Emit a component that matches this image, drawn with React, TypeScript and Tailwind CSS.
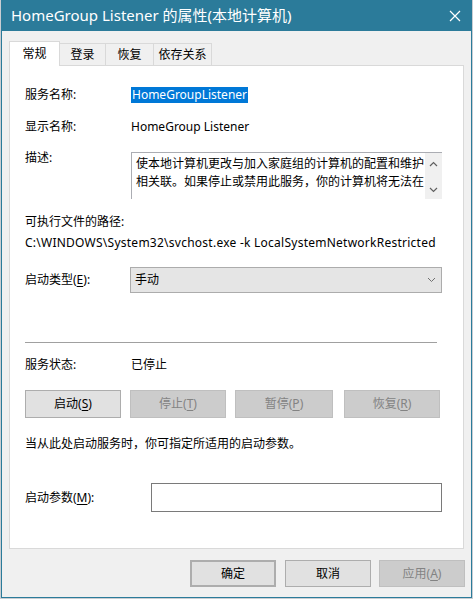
import type { ReactNode } from "react";

const font = { fontFamily: '"Noto Sans", "Noto Sans CJK SC", sans-serif' };

function Key({ k }: { k: string }) {
  return <span className="underline underline-offset-2">{k}</span>;
}

function Btn({
  children,
  disabled,
  className = "",
}: {
  children: ReactNode;
  disabled?: boolean;
  className?: string;
}) {
  return (
    <div
      className={
        "flex items-center justify-center border text-[12px] " +
        (disabled
          ? "bg-[#cccccc] border-[#bfbfbf] text-[#838383] "
          : "bg-[#e1e1e1] border-[#adadad] text-black ") +
        className
      }
    >
      {children}
    </div>
  );
}

function Tab({ label, active, w }: { label: string; active?: boolean; w: string }) {
  if (active) {
    return (
      <div
        className={
          "relative z-10 -mb-px flex h-[25px] items-center justify-center border border-b-0 border-[#d9d9d9] bg-white text-[12px] " +
          w
        }
      >
        {label}
      </div>
    );
  }
  return (
    <div
      className={
        "flex h-[22px] items-center justify-center border border-b-0 border-l-0 border-[#d9d9d9] bg-[#f0f0f0] text-[12px] " +
        w
      }
    >
      {label}
    </div>
  );
}

export default function App() {
  return (
    <div className="h-[599px] w-[473px] bg-[#c9cdd2] pl-px" style={font}>
      <div className="flex h-[598px] w-[471px] flex-col border border-t-0 border-[#2b7b9a] bg-[#f0f0f0] text-black">
        {/* title bar */}
        <div className="flex h-[31px] shrink-0 items-center justify-between bg-[#2b7b9a] pl-[9px] pr-[9px] text-white">
          <span className="text-[15px]">HomeGroup Listener 的属性(本地计算机)</span>
          <svg width="12" height="12" viewBox="0 0 12 12" className="mr-[1px]">
            <path d="M1 1L11 11M11 1L1 11" stroke="white" strokeWidth="1.2" />
          </svg>
        </div>

        <div className="flex flex-col pl-[7px]">
          {/* tabs */}
          <div className="mt-[10px] flex items-end">
            <Tab label="常规" active w="w-[51px]" />
            <Tab label="登录" w="w-[46px]" />
            <Tab label="恢复" w="w-[48px]" />
            <Tab label="依存关系" w="w-[58px]" />
          </div>

          {/* page */}
          <div className="flex h-[484px] w-[455px] flex-col border border-[#d9d9d9] bg-white pl-[15px] text-[12px]">
            <div className="mt-[21px] flex h-[16px] items-center">
              <span className="w-[106px]">服务名称:</span>
              <span className="flex h-[16px] items-center bg-[#0078d7] px-[1px] text-white">
                HomeGroupListener
              </span>
            </div>

            <div className="mt-[16px] flex h-[16px] items-center">
              <span className="w-[106px]">显示名称:</span>
              <span>HomeGroup Listener</span>
            </div>

            <div className="mt-[17px] flex">
              <span className="mt-[-2px] flex h-[16px] w-[106px] items-center">描述:</span>
              <div className="flex h-[47px] w-[311px] border-l border-t border-[#abadb3]">
                <div className="flex-1 overflow-hidden whitespace-nowrap pl-[4px] pt-[2px] text-[12px] leading-[18px]">
                  使本地计算机更改与加入家庭组的计算机的配置和维护
                  <br />
                  相关联。如果停止或禁用此服务，你的计算机将无法在
                </div>
                <div className="flex w-[17px] shrink-0 flex-col items-center justify-between bg-[#f0f0f0] pb-[6px] pt-[8px]">
                  <svg width="9" height="6" viewBox="0 0 9 6">
                    <path d="M1 5L4.5 1.5L8 5" fill="none" stroke="#606060" strokeWidth="1.2" />
                  </svg>
                  <svg width="9" height="6" viewBox="0 0 9 6">
                    <path d="M1 1L4.5 4.5L8 1" fill="none" stroke="#606060" strokeWidth="1.2" />
                  </svg>
                </div>
              </div>
            </div>

            <div className="mt-[15px] flex h-[16px] items-center">可执行文件的路径:</div>
            <div className="mt-[5px] flex h-[16px] items-center tracking-[0.25px]">
              C:\WINDOWS\System32\svchost.exe -k LocalSystemNetworkRestricted
            </div>

            <div className="mt-[16px] flex h-[26px] items-center">
              <span className="w-[105px]">
                启动类型(<Key k="E" />):
              </span>
              <div className="flex h-[26px] w-[312px] items-center justify-between border border-[#acacac] bg-[#e5e5e5] pl-[4px] pr-[5px]">
                <span>手动</span>
                <svg width="9" height="6" viewBox="0 0 9 6">
                  <path d="M1 1L4.5 4.5L8 1" fill="none" stroke="#707070" strokeWidth="1" />
                </svg>
              </div>
            </div>

            <div className="mt-[49px] h-px w-[412px] bg-[#a0a0a0]" />

            <div className="mt-[14px] flex h-[16px] items-center">
              <span className="w-[106px]">服务状态:</span>
              <span>已停止</span>
            </div>

            <div className="mt-[17px] flex h-[28px] items-stretch">
              <Btn className="w-[96px]">
                启动(<Key k="S" />)
              </Btn>
              <Btn disabled className="ml-[9px] w-[96px]">
                停止(<Key k="T" />)
              </Btn>
              <Btn disabled className="ml-[9px] w-[98px]">
                暂停(<Key k="P" />)
              </Btn>
              <Btn disabled className="ml-[11px] w-[96px]">
                恢复(<Key k="R" />)
              </Btn>
            </div>

            <div className="mt-[18px] flex h-[16px] items-center">
              当从此处启动服务时，你可指定所适用的启动参数。
            </div>

            <div className="mt-[31px] flex h-[29px] items-center">
              <span className="w-[126px]">
                启动参数(<Key k="M" />):
              </span>
              <div className="h-[29px] w-[291px] border border-[#7a7a7a] bg-white" />
            </div>
          </div>

          {/* dialog buttons */}
          <div className="mt-[11px] flex h-[27px] pl-[181px]">
            <Btn className="w-[86px] border-2 border-[#0078d7]">确定</Btn>
            <Btn className="ml-[9px] w-[86px]">取消</Btn>
            <Btn disabled className="ml-[8px] w-[86px]">
              应用(<Key k="A" />)
            </Btn>
          </div>
        </div>
      </div>
    </div>
  );
}
